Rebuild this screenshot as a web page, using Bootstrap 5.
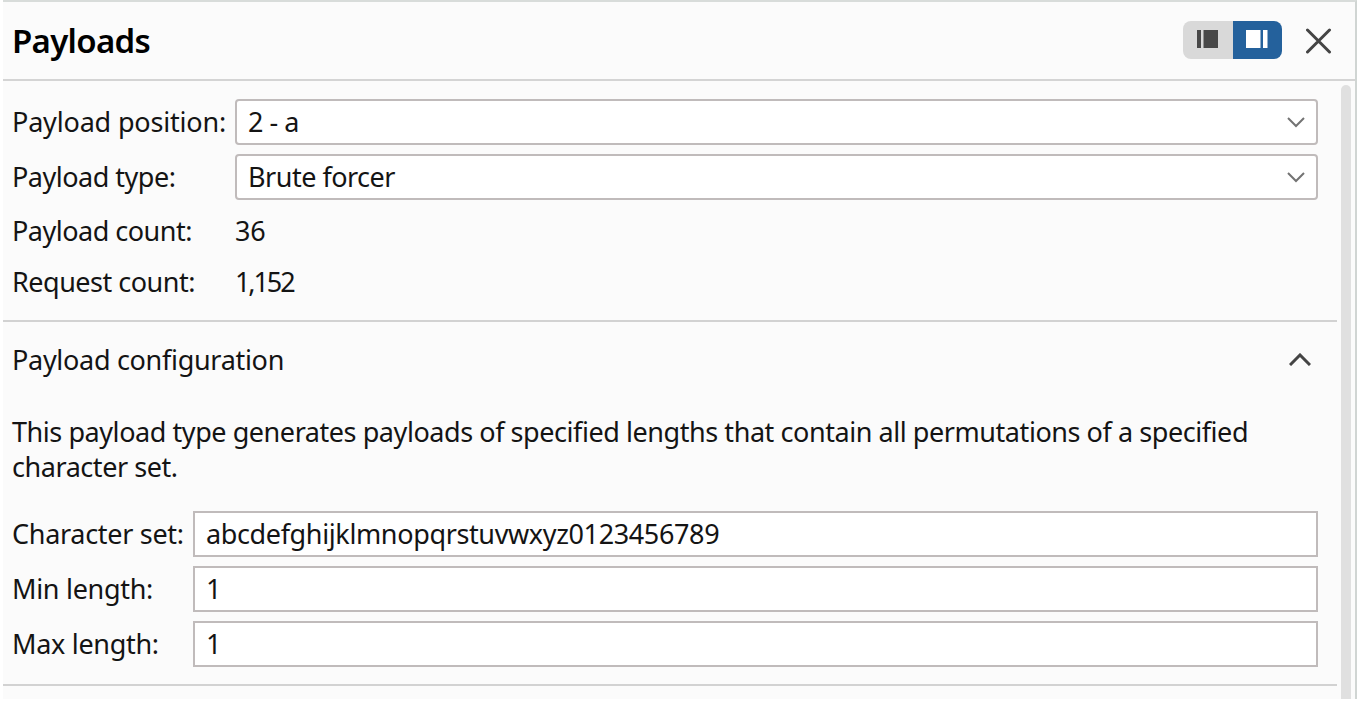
<!DOCTYPE html>
<html lang="en">
<head>
<meta charset="utf-8">
<meta name="viewport" content="width=device-width, initial-scale=1">
<title>Payloads</title>
<link href="https://cdn.jsdelivr.net/npm/bootstrap@5.3.0/dist/css/bootstrap.min.css" rel="stylesheet">
<style>
body{background:#fff;color:#141414;font-family:"Noto Sans",sans-serif;font-size:27px;line-height:35px;letter-spacing:-.3px;overflow:hidden}
.panel{width:1354px;height:699px;margin-left:3px;background:#fbfbfb;border-top:2px solid #d8dcda;border-right:2px solid #d0d5d3}
.panel-head{height:79px;border-bottom:2px solid #d4d4d4;padding:0 23px 0 9px}
.panel-title{font-size:33px;line-height:40px;font-weight:600;color:#000;letter-spacing:-.7px}
.toggle-pair{width:99px;height:38px;border-radius:8px;overflow:hidden;margin-right:24px;margin-bottom:1px}
.toggle-pair button{width:50px;border:0;padding:0 0 2px;background:#d9d9d9}
.toggle-pair button.active{background:#24619c}
.scroll-thumb{width:10px;margin:4px 4px 0 4px;background:#e0e0e0;border-radius:6px 6px 0 0}
.sect{border-bottom:2px solid #d2d2d2;padding-left:9px;padding-right:19px}
.sect-brute{height:364px}
.sect-head{height:74px;padding-right:7px}
.fields{display:grid}
.fields > *{line-height:46px}
.fields-target{grid-template-columns:223px 1fr;grid-template-rows:55px 54px 51px 51px;padding-top:18px;height:239px}
.fields-brute{grid-template-columns:181px 1fr;grid-template-rows:46px 46px 46px;row-gap:9px}
.intro{margin:18px 0 27px;letter-spacing:-.44px}
.box{height:46px;border:2px solid #c0bbbb;background:#fff;padding:0 11px;display:flex;align-items:center}
.box-select{border-radius:4px;justify-content:space-between}
.charset{letter-spacing:-.37px}
.wide{letter-spacing:-.18px}
.tight{letter-spacing:-.5px}
.tighter{letter-spacing:-2.1px}
</style>
</head>
<body>
<main class="panel d-flex flex-column">
  <header class="panel-head d-flex align-items-center">
    <h1 class="panel-title m-0 me-auto">Payloads</h1>
    <div class="toggle-pair d-flex">
      <button type="button" aria-label="Dock left"><svg class="d-block mx-auto" width="22" height="18" viewBox="0 0 22 18" fill="#484848"><path d="M0 0h4v18H0zM6.500 0H21v18H6.500z"/></svg></button>
      <button type="button" class="active" aria-label="Dock right"><svg class="d-block mx-auto" width="22" height="18" viewBox="0 0 22 18" fill="#fff"><path d="M0 0h14.500v18H0zM17 0h4.500v18H17z"/></svg></button>
    </div>
    <svg width="26" height="26" viewBox="0 0 26 26" fill="none" stroke="#444" stroke-width="3" stroke-linecap="round"><path d="M1.500 2 23.500 24M23.500 2 1.500 24"/></svg>
  </header>
  <div class="d-flex flex-grow-1">
    <div class="flex-grow-1">
      <section class="sect">
        <div class="fields fields-target">
          <span class="wide">Payload position:</span>
          <div class="box box-select"><span class="tight">2 - a</span><svg width="18" height="11" viewBox="0 0 18 11" fill="none" stroke="#737373" stroke-width="2"><path d="m1 1 8 8 8-8"/></svg></div>
          <span class="tight">Payload type:</span>
          <div class="box box-select"><span class="tight">Brute forcer</span><svg width="18" height="11" viewBox="0 0 18 11" fill="none" stroke="#737373" stroke-width="2"><path d="m1 1 8 8 8-8"/></svg></div>
          <span class="tight">Payload count:</span><span>36</span>
          <span class="tight">Request count:</span><span class="tighter">1,152</span>
        </div>
      </section>
      <section class="sect sect-brute">
        <div class="sect-head d-flex align-items-center justify-content-between">
          <span>Payload configuration</span>
          <svg width="22" height="13" viewBox="0 0 22 13" fill="none" stroke="#444" stroke-width="3"><path d="m1 12 10-10 10 10"/></svg>
        </div>
        <p class="intro">This payload type generates payloads of specified lengths that contain all permutations of a specified<br>character set.</p>
        <div class="fields fields-brute">
          <span>Character set:</span><div class="box"><span class="charset">abcdefghijklmnopqrstuvwxyz0123456789</span></div>
          <span>Min length:</span><div class="box">1</div>
          <span>Max length:</span><div class="box">1</div>
        </div>
      </section>
    </div>
    <div class="scroll-thumb"></div>
  </div>
</main>
<script src="https://cdn.jsdelivr.net/npm/bootstrap@5.3.0/dist/js/bootstrap.bundle.min.js"></script>
</body>
</html>
